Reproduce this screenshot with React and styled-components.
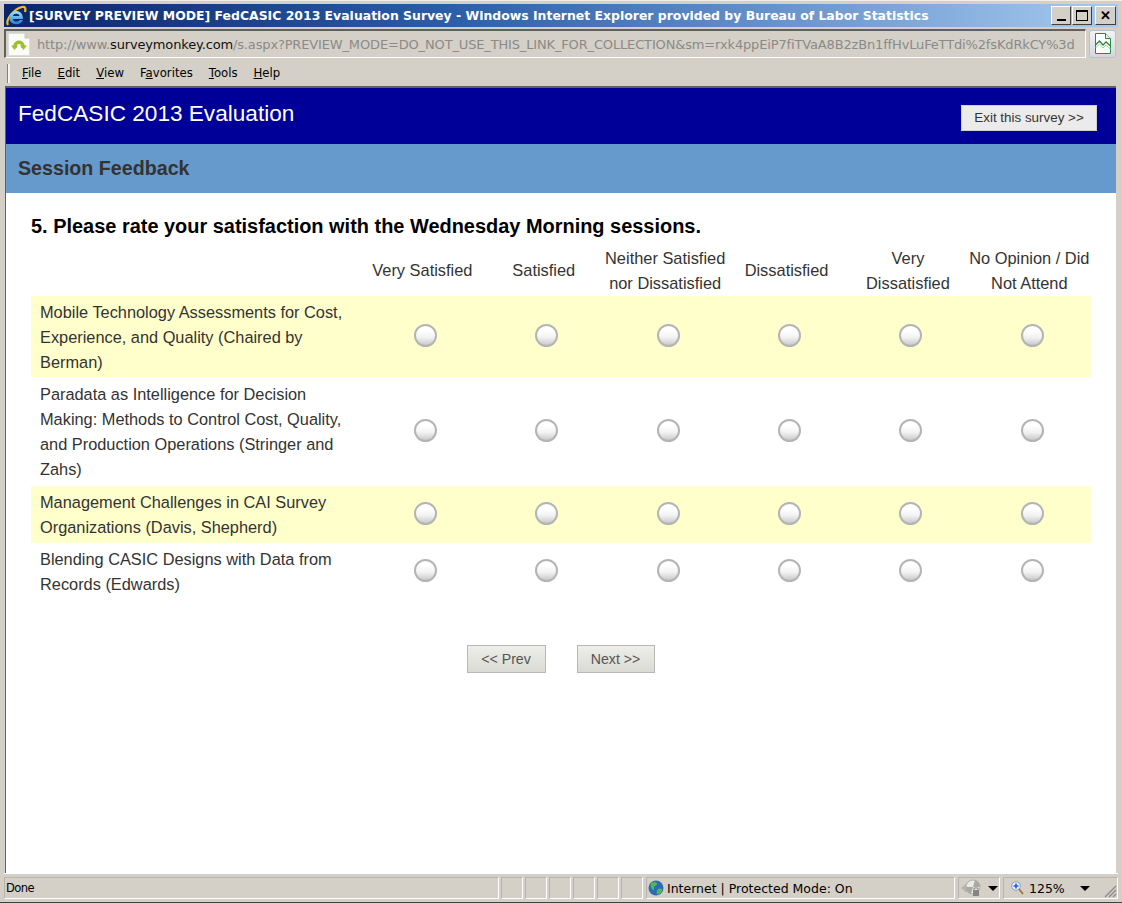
import React from 'react';
import styled, { createGlobalStyle } from 'styled-components';

const COLUMNS = [
  ['Very Satisfied'],
  ['Satisfied'],
  ['Neither Satisfied', 'nor Dissatisfied'],
  ['Dissatisfied'],
  ['Very', 'Dissatisfied'],
  ['No Opinion / Did', 'Not Attend'],
];

const ROWS = [
  { lines: ['Mobile Technology Assessments for Cost,', 'Experience, and Quality (Chaired by', 'Berman)'], height: 81, pad: 4, shaded: true },
  { lines: ['Paradata as Intelligence for Decision', 'Making: Methods to Control Cost, Quality,', 'and Production Operations (Stringer and', 'Zahs)'], height: 109, pad: 5 },
  { lines: ['Management Challenges in CAI Survey', 'Organizations (Davis, Shepherd)'], height: 57, pad: 4, shaded: true },
  { lines: ['Blending CASIC Designs with Data from', 'Records (Edwards)'], height: 57, pad: 4 },
];

const MENU = [
  ['F', 'ile'],
  ['E', 'dit'],
  ['V', 'iew'],
  ['Fa', 'vorites', 1],
  ['T', 'ools'],
  ['H', 'elp'],
];

function IeLogo() {
  return (
    <svg width="22" height="22" viewBox="0 0 22 22">
      <defs>
        <linearGradient id="ieBlue" x1="0" y1="0" x2="0" y2="1">
          <stop offset="0" stopColor="#9fe0f8" />
          <stop offset="1" stopColor="#1f82d8" />
        </linearGradient>
      </defs>
      <path d="M3 20C0 15 9 4 17 2c3-.8 4 1 3 5" fill="none" stroke="#f5bb22" strokeWidth="2.200" />
      <path d="M4 12.500a7 7 0 0 1 13.600-1.600l.4 3H8c.3 3 4.500 3.500 7 1h3c-2.500 6-13.600 6-14-2.400zM8 11h6.500c-.5-3-6-3-6.500 0z" fill="url(#ieBlue)" fillRule="evenodd" />
    </svg>
  );
}

function PageIcon() {
  return (
    <svg width="22" height="23" viewBox="0 0 22 23">
      <path d="M.5.5h16l5 5v17H.5z" fill="#fbfbf8" stroke="#dddcd6" />
      <path d="M16.500.5v5h5z" fill="#c8c8c4" />
      <path d="M7 15v-2c0-5 8-5 8 0v2" fill="none" stroke="#9ebf2f" strokeWidth="3.400" />
      <path d="M3 12.500h7l-3.500 4.500zM12 12.500h7l-3.500 4.500z" fill="#9ebf2f" />
    </svg>
  );
}

function ReportIcon() {
  return (
    <svg width="18" height="22" viewBox="0 0 18 22">
      <path d="M1.500.5h10l5 5v15h-15z" fill="#fff" stroke="#2a8a3a" />
      <path d="M11.500.5v5h5" fill="#e8f2e8" stroke="#2a8a3a" />
      <path d="M1.500 12l4-4 3.500 4 3-3 4.500 4" fill="none" stroke="#2a8a3a" strokeWidth="1.300" />
      <path d="M1.500 15l4-4 3.500 4 3-3 4.500 4" fill="none" stroke="#9ccfa5" />
    </svg>
  );
}

function Globe() {
  return (
    <svg width="16" height="16" viewBox="0 0 16 16">
      <circle cx="8" cy="8" r="7.500" fill="#2a6cb8" />
      <path d="M3 3c3-2 6-1 6 1s-3 1-3 4-1 3-2 1-2-3-1-6zM10 9c2-1 5-1 4 2s-4 4-5 3 0-4 1-5z" fill="#55b84a" />
    </svg>
  );
}

function Magnifier() {
  return (
    <svg width="13" height="14" viewBox="0 0 13 14">
      <circle cx="5" cy="5" r="4.300" fill="#eaf3fb" stroke="#7da0c4" />
      <path d="M2.500 5h5M5 2.500v5" stroke="#1f5fd0" strokeWidth="1.600" />
      <path d="M8 8l4 5" stroke="#a8763c" strokeWidth="2" />
    </svg>
  );
}

function SecurityIcon() {
  return (
    <svg width="20" height="18" viewBox="0 0 20 18">
      <path d="M0 9l6-5v3h2v4H6v3z" fill="#b5b4ae" />
      <circle cx="12" cy="8" r="7" fill="#eceae4" stroke="#b0afa8" />
      <path d="M12 8l2-7a7 7 0 0 1 5 7zM12 8l-2 7a7 7 0 0 1-5-7z" fill="#a9a8a2" />
      <rect x="12" y="11" width="6" height="6" fill="#85847e" />
      <path d="M13 11V9h4v2" fill="none" stroke="#85847e" />
    </svg>
  );
}

function ResizeGrip() {
  return (
    <svg width="14" height="14" viewBox="0 0 14 14">
      <path d="M13 2L2 13M13 6l-7 7M13 10l-3 3" stroke="#8e8b84" strokeWidth="1.400" />
    </svg>
  );
}

export default function App() {
  return (
    <Window>
      <GlobalStyle />
      <TitleBar>
        <IeLogo />
        <TitleText>[SURVEY PREVIEW MODE] FedCASIC 2013 Evaluation Survey - Windows Internet Explorer provided by Bureau of Labor Statistics</TitleText>
        <WindowButtons>
          <WindowButton><Minimize /></WindowButton>
          <WindowButton><Maximize /></WindowButton>
          <WindowButton $close>✕</WindowButton>
        </WindowButtons>
      </TitleBar>

      <AddressRow>
        <AddressBox>
          <PageIcon />
          <Url>
            http://www.<strong>surveymonkey.com</strong>/s.aspx?PREVIEW_MODE=DO_NOT_USE_THIS_LINK_FOR_COLLECTION&amp;sm=rxk4ppEiP7fiTVaA8B2zBn1ffHvLuFeTTdi%2fsKdRkCY%3d
          </Url>
        </AddressBox>
        <CompatButton><ReportIcon /></CompatButton>
      </AddressRow>

      <MenuBar>
        <Gripper />
        {MENU.map(([key, rest, second]) => (
          <MenuItem key={rest}>
            {second ? <>F<u>a</u></> : <u>{key}</u>}
            {rest}
          </MenuItem>
        ))}
      </MenuBar>

      <Viewport>
        <SurveyHeader>
          <SurveyTitle>FedCASIC 2013 Evaluation</SurveyTitle>
          <ExitButton>Exit this survey &gt;&gt;</ExitButton>
        </SurveyHeader>
        <PageTitle>Session Feedback</PageTitle>
        <Body>
          <Question>5. Please rate your satisfaction with the Wednesday Morning sessions.</Question>
          <Matrix>
            <HeadRow>
              <span />
              {COLUMNS.map((lines) => (
                <HeadCell key={lines[0]} $single={lines.length === 1}>
                  {lines.map((line) => <div key={line}>{line}</div>)}
                </HeadCell>
              ))}
            </HeadRow>
            {ROWS.map((row) => (
              <MatrixRow key={row.lines[0]} $shaded={row.shaded} $height={row.height}>
                <RowLabel $pad={row.pad}>
                  {row.lines.map((line) => <div key={line}>{line}</div>)}
                </RowLabel>
                {COLUMNS.map((lines) => (
                  <RadioCell key={lines[0]}><Radio /></RadioCell>
                ))}
              </MatrixRow>
            ))}
          </Matrix>
          <Nav>
            <NavButton $width={79}>&lt;&lt; Prev</NavButton>
            <NavButton $width={78}>Next &gt;&gt;</NavButton>
          </Nav>
        </Body>
      </Viewport>

      <StatusBar>
        <StatusDone>Done</StatusDone>
        {[0, 1, 2, 3, 4, 5].map((n) => <StatusSlot key={n} />)}
        <StatusZone><Globe />Internet | Protected Mode: On</StatusZone>
        <StatusSecurity><SecurityIcon /><Caret /></StatusSecurity>
        <StatusZoom>
          <Magnifier />125%<Caret $wide />
          <Grip><ResizeGrip /></Grip>
        </StatusZoom>
      </StatusBar>
    </Window>
  );
}

const GlobalStyle = createGlobalStyle`
  html, body {
    margin: 0;
    padding: 0;
    background: #d4d0c8;
  }
`;

const Window = styled.div`
  width: 1122px;
  height: 903px;
  box-sizing: border-box;
  padding: 3px 4px 3px;
  display: flex;
  flex-direction: column;
  background: #d4d0c8;
  border-top: 1px solid #f0eee8;
  border-bottom: 1px solid #404040;
  overflow: hidden;
  font-family: "Liberation Sans", Arial, sans-serif;
`;

const TitleBar = styled.div`
  height: 23px;
  flex: none;
  display: flex;
  align-items: center;
  gap: 2px;
  padding-left: 1px;
  background: linear-gradient(90deg, #0a246a 0%, #2b5ea8 40%, #a6caf0 100%);
`;

const TitleText = styled.div`
  flex: 1;
  font-family: "DejaVu Sans", Tahoma, sans-serif;
  font-weight: bold;
  font-size: 12.45px;
  color: #fff;
  white-space: nowrap;
  overflow: hidden;
`;

const WindowButtons = styled.div`
  display: flex;
  gap: 1px;
  padding-right: 2px;
`;

const WindowButton = styled.div`
  width: ${(p) => (p.$close ? '21px' : '20px')};
  height: 19px;
  box-sizing: border-box;
  margin-left: ${(p) => (p.$close ? '2px' : '0')};
  display: flex;
  align-items: center;
  justify-content: center;
  background: #d4d0c8;
  border: 1px solid;
  border-color: #fff #404040 #404040 #fff;
  font-size: 13px;
  font-weight: bold;
  color: #000;
`;

const Minimize = styled.div`
  width: 9px;
  height: 2px;
  margin-top: 9px;
  background: #000;
`;

const Maximize = styled.div`
  width: 12px;
  height: 11px;
  box-sizing: border-box;
  border: 1px solid #000;
  border-top-width: 2px;
`;

const AddressRow = styled.div`
  height: 31px;
  flex: none;
  display: flex;
  gap: 3px;
  padding-top: 2px;
  box-sizing: border-box;
`;

const AddressBox = styled.div`
  flex: 1;
  min-width: 0;
  height: 29px;
  box-sizing: border-box;
  display: flex;
  align-items: center;
  gap: 7px;
  padding-left: 2px;
  border-style: solid;
  border-color: #606060 #fff #fff #606060;
  border-width: 2px 1px 1px 2px;
  overflow: hidden;
`;

const Url = styled.div`
  font-family: "DejaVu Sans", Tahoma, sans-serif;
  font-size: 13px;
  letter-spacing: -0.15px;
  color: #8a8a86;
  white-space: nowrap;

  strong {
    font-weight: normal;
    color: #111;
  }
`;

const CompatButton = styled.div`
  width: 25px;
  height: 26px;
  margin-top: 1px;
  margin-right: 2px;
  display: flex;
  align-items: center;
  justify-content: center;
  border: 1px solid #bcc0c8;
  border-radius: 3px;
  background: linear-gradient(#f2f3f6, #d2d6e2);
`;

const MenuBar = styled.div`
  height: 28px;
  flex: none;
  box-sizing: border-box;
  display: flex;
  align-items: center;
  gap: 16px;
  padding: 2px 0 0 3px;
  font-family: "DejaVu Sans", Tahoma, sans-serif;
  font-size: 11.7px;
  color: #000;
`;

const Gripper = styled.div`
  width: 2px;
  height: 19px;
  margin-right: -4px;
  background: #f4f3ef;
  border-left: 1px solid #808080;
`;

const MenuItem = styled.div`
  white-space: nowrap;
`;

const Viewport = styled.div`
  flex: 1;
  min-height: 0;
  margin: 0 2px 0 1px;
  background: #fff;
  border-top: 2px solid #606060;
  border-left: 1px solid #606060;
`;

const SurveyHeader = styled.div`
  height: 56px;
  box-sizing: border-box;
  display: flex;
  justify-content: space-between;
  padding: 17px 19px 0 12px;
  background: #000099;
`;

const SurveyTitle = styled.div`
  font-size: 22.6px;
  line-height: 18px;
  color: #fff;
`;

const ExitButton = styled.div`
  width: 136px;
  height: 26px;
  box-sizing: border-box;
  display: flex;
  align-items: center;
  justify-content: center;
  padding-bottom: 2px;
  background: #ebebeb;
  border: 1px solid #d0d0d0;
  font-size: 13.4px;
  color: #333;
`;

const PageTitle = styled.div`
  height: 49px;
  box-sizing: border-box;
  padding: 13px 12px 0;
  background: #6699cc;
  font-size: 19.66px;
  font-weight: bold;
  color: #333;
`;

const Body = styled.div`
  padding: 21px 25px 0;
`;

const Question = styled.div`
  font-size: 19.95px;
  font-weight: bold;
  color: #000;
  line-height: 24px;
`;

const Matrix = styled.div`
  width: 1060px;
  margin-top: 8px;
`;

const gridColumns = '333.7px repeat(6, 121.4px)';

const HeadRow = styled.div`
  display: grid;
  grid-template-columns: ${gridColumns};
  height: 50px;
  align-items: center;
`;

const HeadCell = styled.div`
  padding-bottom: ${(p) => (p.$single ? '2px' : '0')};
  font-size: 16.4px;
  line-height: 25px;
  color: #333;
  text-align: center;
  white-space: nowrap;
  transform: translateX(-3px);
`;

const MatrixRow = styled.div`
  display: grid;
  grid-template-columns: ${gridColumns};
  height: ${(p) => p.$height}px;
  align-items: center;
  background: ${(p) => (p.$shaded ? '#ffffcc' : '#fff')};
`;

const RowLabel = styled.div`
  align-self: start;
  padding: ${(p) => p.$pad}px 0 0 9px;
  font-size: 16.35px;
  line-height: 25px;
  color: #333;
  white-space: nowrap;
`;

const RadioCell = styled.div`
  display: flex;
  justify-content: center;
  padding-bottom: 2px;
`;

const Radio = styled.div`
  width: 23px;
  height: 23px;
  box-sizing: border-box;
  border-radius: 50%;
  border: 2px solid #b4b4b4;
  background: linear-gradient(#ffffff 25%, #f2f2f2 60%, #c9c9c9 100%);
`;

const Nav = styled.div`
  display: flex;
  justify-content: center;
  gap: 31px;
  margin-top: 45px;
  padding-right: 1px;
`;

const NavButton = styled.div`
  width: ${(p) => p.$width}px;
  height: 28px;
  box-sizing: border-box;
  display: flex;
  align-items: center;
  justify-content: center;
  background: linear-gradient(#eeeeea, #d9dbd3);
  border: 1px solid #b8b8b8;
  font-size: 14.2px;
  color: #555;
`;

const StatusBar = styled.div`
  height: 26px;
  flex: none;
  display: flex;
  gap: 2px;
  box-sizing: border-box;
  border-top: 1px solid #fff;
  padding-top: 3px;
  font-family: "DejaVu Sans", Tahoma, sans-serif;
  font-size: 12.5px;
  color: #000;
`;

const StatusPanel = styled.div`
  height: 22px;
  flex: none;
  box-sizing: border-box;
  display: flex;
  align-items: center;
  border: 1px solid;
  border-color: #b8b5ae #fff #fff #b8b5ae;
`;

const StatusDone = styled(StatusPanel)`
  width: 495px;
  padding-left: 1px;
  font-size: 11.5px;
  letter-spacing: -0.6px;
`;

const StatusSlot = styled(StatusPanel)`
  width: 22px;
`;

const StatusZone = styled(StatusPanel)`
  width: 309px;
  margin-left: 1px;
  gap: 3px;
  padding-left: 1px;
  white-space: nowrap;
`;

const StatusSecurity = styled(StatusPanel)`
  width: 42px;
  margin-left: 1px;
  gap: 7px;
  padding-left: 2px;
`;

const StatusZoom = styled(StatusPanel)`
  flex: 1;
  margin-left: 1px;
  gap: 5px;
  padding-left: 7px;
  position: relative;
`;

const Caret = styled.div`
  width: 0;
  height: 0;
  margin-left: ${(p) => (p.$wide ? '10px' : '0')};
  border-left: 5px solid transparent;
  border-right: 5px solid transparent;
  border-top: 5px solid #000;
`;

const Grip = styled.div`
  position: absolute;
  right: 0;
  bottom: 0;
  display: flex;
`;
